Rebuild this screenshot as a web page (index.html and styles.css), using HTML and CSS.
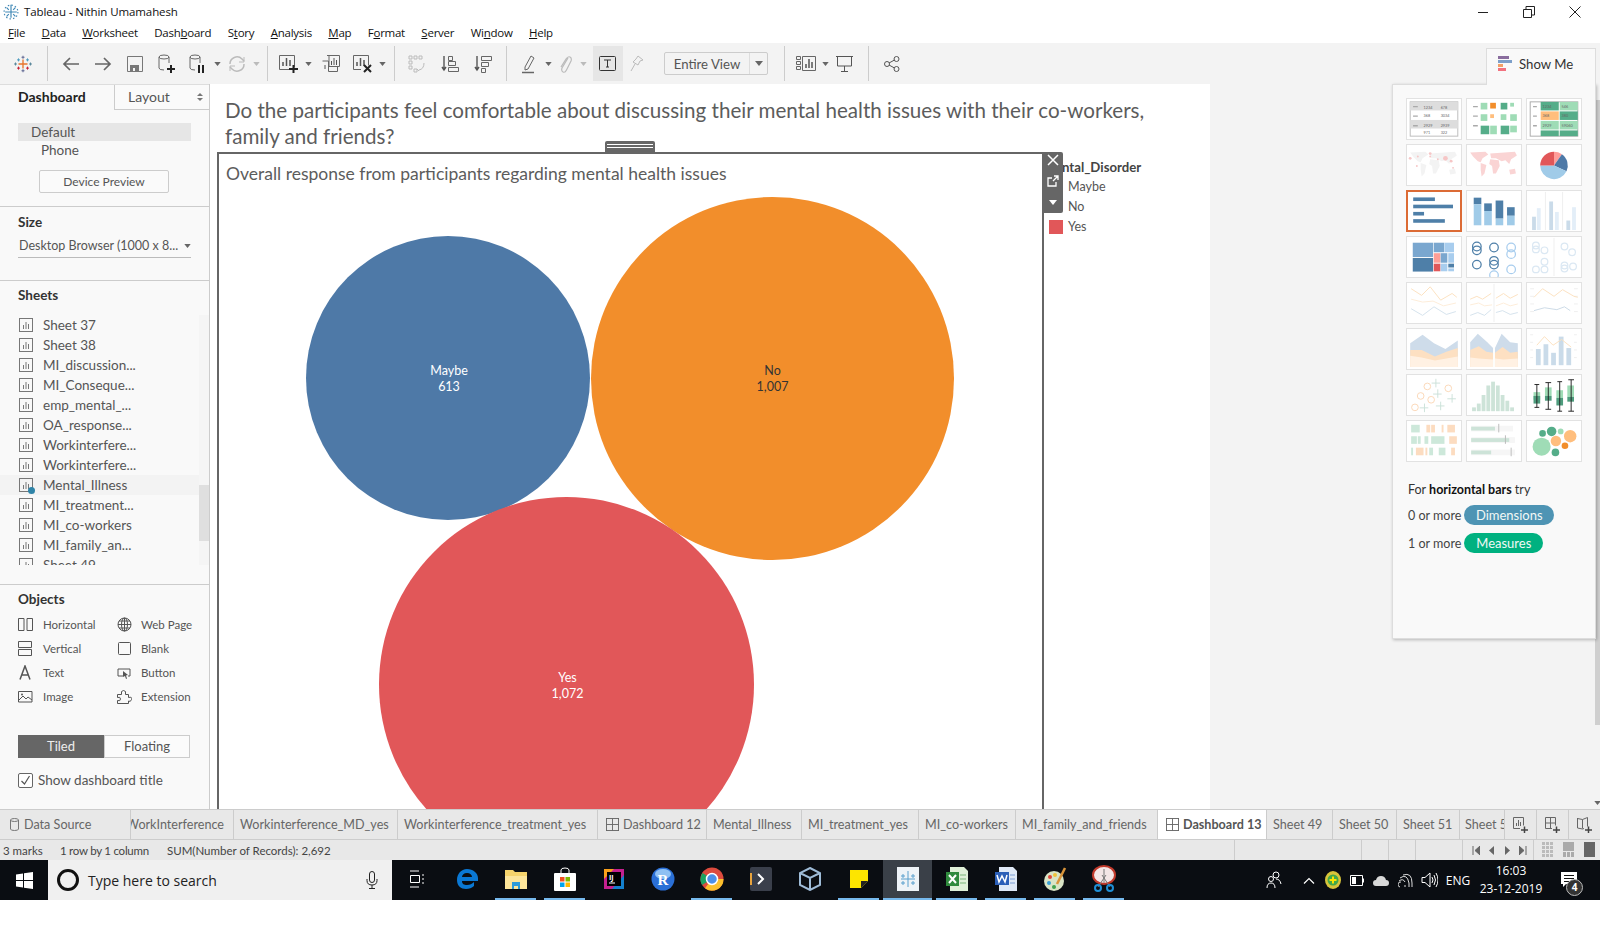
FILE: index.html
```html
<!DOCTYPE html>
<html lang="en">
<head>
<meta charset="utf-8">
<title>Tableau - Nithin Umamahesh</title>
<link rel="stylesheet" href="styles.css">
</head>
<body>
<svg class="defs" width="0" height="0" aria-hidden="true">
  <symbol id="sheet" viewBox="0 0 14 14"><rect x=".5" y=".5" width="13" height="13" fill="none" stroke="#777"/><path d="M4.500 7v4M7 4v7M9.500 6v5" stroke="#777" fill="none"/></symbol>
  <symbol id="dash" viewBox="0 0 14 14"><rect x=".5" y=".5" width="13" height="13" fill="none" stroke="#666"/><path d="M7 .5v13M.5 7h13" stroke="#666" fill="none"/></symbol>
  <symbol id="caret" viewBox="0 0 8 5"><path d="M0 0h8L4 5z" fill="#666"/></symbol>
  <symbol id="caretlight" viewBox="0 0 8 5"><path d="M0 0h8L4 5z" fill="#bbb"/></symbol>
  <symbol id="tlogo" viewBox="-1 0 24 22"><g fill="none" stroke-width="1.300"><path d="M11 5v12M5 11h12" stroke="#e8762d" stroke-width="1.800"/><path d="M11 0v4M9 2h4M11 18v4M9 20h4" stroke="#5b6591"/><path d="M5 3.500v4M3 5.500h4M17 3.500v4M15 5.500h4" stroke="#4e9bc0"/><path d="M5 14.500v4M3 16.500h4M17 14.500v4M15 16.500h4" stroke="#c72035"/><path d="M1 9v4M-1 11h4M21 9v4M19 11h4" stroke="#59879b"/></g></symbol>
</svg>

<header class="titlebar">
  <div class="titleline">
    <svg class="applogo" width="16" height="16" viewBox="0 0 22 22"><g fill="none" stroke="#3f87b5" stroke-width="1.600"><path d="M11 3v16M3 11h16M11 1v3M5 5l3 3M17 5l-3 3M5 17l3-3M17 17l-3-3"/><circle cx="11" cy="11" r="9.500" stroke-dasharray="2 3"/></g></svg>
    <span class="apptitle">Tableau - Nithin Umamahesh</span>
    <div class="winctl">
      <svg width="12" height="12" viewBox="0 0 12 12"><path d="M1 6.500h10" stroke="#222"/></svg>
      <svg width="12" height="12" viewBox="0 0 12 12"><path d="M.5 3.500h8v8h-8zM3 3V.5h8.500V9H9" fill="none" stroke="#222"/></svg>
      <svg width="12" height="12" viewBox="0 0 12 12"><path d="M.5.500l11 11M11.500.500l-11 11" stroke="#222"/></svg>
    </div>
  </div>
  <nav class="menubar">
    <span><u>F</u>ile</span><span><u>D</u>ata</span><span><u>W</u>orksheet</span><span>Dash<u>b</u>oard</span><span>S<u>t</u>ory</span><span><u>A</u>nalysis</span><span><u>M</u>ap</span><span>F<u>o</u>rmat</span><span><u>S</u>erver</span><span>Wi<u>n</u>dow</span><span><u>H</u>elp</span>
  </nav>
</header>

<div class="toolbar">
  <div class="tb tb-logo"><svg width="18" height="18"><use href="#tlogo"/></svg></div>
  <i class="sep s-a"></i>
  <div class="tb"><svg width="18" height="16" viewBox="0 0 18 16"><path d="M17 8H2M8 2L2 8l6 6" fill="none" stroke="#666" stroke-width="1.700"/></svg></div>
  <div class="tb"><svg width="18" height="16" viewBox="0 0 18 16"><path d="M1 8h15M10 2l6 6-6 6" fill="none" stroke="#666" stroke-width="1.700"/></svg></div>
  <div class="tb"><svg width="16" height="16" viewBox="0 0 16 16"><path d="M.5.500h15v15H.5z" fill="none" stroke="#777"/><path d="M3 15V9h9v6H8v-3H6v3z" fill="#777"/></svg></div>
  <div class="tb"><svg width="18" height="20" viewBox="0 0 18 20"><ellipse cx="6" cy="3" rx="5" ry="2" fill="none" stroke="#666"/><path d="M1 3v11q0 2 5 2M11 3v6" fill="none" stroke="#666"/><path d="M9 15h8M13 11v8" stroke="#222" stroke-width="2"/></svg></div>
  <div class="tb tb-n"><svg width="18" height="20" viewBox="0 0 18 20"><ellipse cx="6" cy="3" rx="5" ry="2" fill="none" stroke="#666"/><path d="M1 3v11q0 2 5 2M11 3v6" fill="none" stroke="#666"/><path d="M10 11v8M14 11v8" stroke="#222" stroke-width="2"/></svg></div>
  <svg class="cr" width="7" height="4"><use href="#caret"/></svg>
  <div class="tb tb-r"><svg width="18" height="18" viewBox="0 0 18 18"><path d="M2 9a7 7 0 0 1 12-5l2 2M16 9a7 7 0 0 1-12 5l-2-2" fill="none" stroke="#bbb" stroke-width="1.500"/><path d="M16 2v5h-5M2 16v-5h5" fill="none" stroke="#bbb"/></svg></div>
  <svg class="cr" width="7" height="4"><use href="#caretlight"/></svg>
  <i class="sep s-b"></i>
  <div class="tb"><svg width="20" height="20" viewBox="0 0 20 20"><path d="M.5 1.500h15v12M10 15.500H.5v-14" fill="none" stroke="#666"/><path d="M4 12V8M7.500 12V4M11 12V6" stroke="#555" stroke-width="1.500"/><path d="M10 15h9M14.500 11v8" stroke="#222" stroke-width="2"/></svg></div>
  <svg class="cr cr-n cr-a" width="7" height="4"><use href="#caret"/></svg>
  <div class="tb"><svg width="18" height="17" viewBox="0 0 18 17"><path d="M5 .5h12.500v11H7V0M.5 6h6v10.500h9V12" fill="none" stroke="#666"/><path d="M9.500 10V6M12 10V3M14.500 10V5M3 14v-4" stroke="#555"/></svg></div>
  <div class="tb"><svg width="20" height="20" viewBox="0 0 20 20"><path d="M.5 1.500h15v10M8 15.500H.5v-14" fill="none" stroke="#666"/><path d="M4 12V8M7.500 12V4M11 12V6" stroke="#555" stroke-width="1.500"/><path d="M11 11l7 7M18 11l-7 7" stroke="#222" stroke-width="2"/></svg></div>
  <svg class="cr cr-n" width="7" height="4"><use href="#caret"/></svg>
  <i class="sep s-c"></i>
  <div class="tb"><svg width="18" height="18" viewBox="0 0 18 18"><path d="M1 1h3v3H1zM6 1h3v3H6zM11 1h3v3h-3zM1 6h3v3H1zM1 11h3v3H1zM6 14h3v3H6z" fill="none" stroke="#bbb"/><path d="M16 8q0 6-5 7M9 14l2 2" fill="none" stroke="#bbb"/></svg></div>
  <div class="tb tb-sort"><svg width="18" height="18" viewBox="0 0 18 18"><path d="M3 1v14M1 12l2 3 2-3" fill="none" stroke="#555" stroke-width="1.400"/><path d="M7.500 1.500h4v4h-4zM7.500 6.500h7v4h-7zM7.500 12.500h10v4h-10z" fill="none" stroke="#666"/></svg></div>
  <div class="tb tb-sort"><svg width="18" height="18" viewBox="0 0 18 18"><path d="M3 1v14M1 12l2 3 2-3" fill="none" stroke="#555" stroke-width="1.400"/><path d="M7.500 1.500h10v4h-10zM7.500 7.500h7v4h-7zM7.500 13.500h4v4h-4z" fill="none" stroke="#666"/></svg></div>
  <i class="sep s-d"></i>
  <div class="tb tb-hl"><svg width="14" height="20" viewBox="0 0 14 20"><path d="M3 13L9 2l3 2-6 11-3 1z" fill="none" stroke="#666"/><path d="M0 18.500h12" stroke="#666" stroke-width="1.500"/></svg></div>
  <svg class="cr cr-w" width="7" height="4"><use href="#caret"/></svg>
  <div class="tb tb-clip"><svg width="14" height="20" viewBox="0 0 14 20"><path d="M10 4l-6 10q-1 3 1 4t3.500-2L13 7q1-3-1-4t-4 2L3 13" fill="none" stroke="#bbb" stroke-width="1.200"/></svg></div>
  <svg class="cr cr-w" width="7" height="4"><use href="#caretlight"/></svg>
  <div class="tb tb-t"><svg width="18" height="16" viewBox="0 0 18 16"><rect x=".5" y=".5" width="16" height="14" rx="1" fill="none" stroke="#333"/><path d="M5 4h7M8.500 4v7M7 11h3" fill="none" stroke="#333"/></svg></div>
  <div class="tb tb-pin"><svg width="14" height="17" viewBox="0 0 14 17"><path d="M8 1l5 4-3 1-2 4-5-3 3-3zM5 9l-4 7" fill="none" stroke="#bbb"/></svg></div>
  <div class="fitbox"><span class="fitlabel">Entire View</span><span class="fitcaret"><svg width="8" height="5"><use href="#caret"/></svg></span></div>
  <i class="sep s-e"></i>
  <div class="tb tb-cards"><svg width="20" height="15" viewBox="0 0 20 15"><path d="M.5.500h4v3h-4zM.5 5.500h4v3h-4zM.5 10.500h4v3h-4zM6.500.500h13v14h-13z" fill="none" stroke="#666"/><path d="M10 12V8M13 12V3M16 12V6" stroke="#555" stroke-width="1.500"/></svg></div>
  <svg class="cr cr-n" width="7" height="4"><use href="#caret"/></svg>
  <div class="tb tb-pres"><svg width="18" height="17" viewBox="0 0 18 17"><path d="M0 1.500h17M1.500 2v9h14V2M8.500 11v5M5 16.500h7" fill="none" stroke="#555"/></svg></div>
  <i class="sep s-f"></i>
  <div class="tb tb-share"><svg width="16" height="16" viewBox="0 0 16 16"><circle cx="3" cy="8" r="2.500" fill="none" stroke="#555"/><circle cx="12.500" cy="3" r="2.500" fill="none" stroke="#555"/><circle cx="12.500" cy="13" r="2.500" fill="none" stroke="#555"/><path d="M5 7l5.500-3M5 9l5.500 3" stroke="#555"/></svg></div>
</div>

<main class="workspace">
  <aside class="sidebar">
    <div class="sidetabs">
      <div class="sidetab-on">Dashboard</div>
      <div class="sidetab-off">Layout<span class="updown"><i class="up"></i><i class="down"></i></span></div>
    </div>
    <section class="sec sec-dev">
      <div class="devrow devrow-on">Default</div>
      <div class="devrow devrow-sub">Phone</div>
      <button class="devbtn">Device Preview</button>
    </section>
    <section class="sec sec-size">
      <h3 class="sechead">Size</h3>
      <div class="sizesel"><span>Desktop Browser (1000 x 8...</span><svg width="7" height="4"><use href="#caret"/></svg></div>
    </section>
    <section class="sec sec-sheets">
      <h3 class="sechead">Sheets</h3>
      <div class="sheetwrap">
        <ul class="sheetlist">
          <li><svg width="14" height="14"><use href="#sheet"/></svg>Sheet 37</li>
          <li><svg width="14" height="14"><use href="#sheet"/></svg>Sheet 38</li>
          <li><svg width="14" height="14"><use href="#sheet"/></svg>MI_discussion...</li>
          <li><svg width="14" height="14"><use href="#sheet"/></svg>MI_Conseque...</li>
          <li><svg width="14" height="14"><use href="#sheet"/></svg>emp_mental_...</li>
          <li><svg width="14" height="14"><use href="#sheet"/></svg>OA_response...</li>
          <li><svg width="14" height="14"><use href="#sheet"/></svg>Workinterfere...</li>
          <li><svg width="14" height="14"><use href="#sheet"/></svg>Workinterfere...</li>
          <li class="sheet-hl"><svg width="14" height="14"><use href="#sheet"/></svg><b class="tick"></b>Mental_Illness</li>
          <li><svg width="14" height="14"><use href="#sheet"/></svg>MI_treatment...</li>
          <li><svg width="14" height="14"><use href="#sheet"/></svg>MI_co-workers</li>
          <li><svg width="14" height="14"><use href="#sheet"/></svg>MI_family_an...</li>
          <li><svg width="14" height="14"><use href="#sheet"/></svg>Sheet 49</li>
        </ul>
        <div class="vscroll"><div class="vthumb"></div></div>
      </div>
    </section>
    <section class="sec-obj">
      <h3 class="sechead">Objects</h3>
      <div class="objgrid">
        <div class="obj"><svg width="15" height="15" viewBox="0 0 15 15"><path d="M.5 1.500h5.500v12H.5zM9 1.500h5.500v12H9z" fill="none" stroke="#555"/></svg>Horizontal</div>
        <div class="obj"><svg width="15" height="15" viewBox="0 0 15 15"><circle cx="7.500" cy="7.500" r="6.500" fill="none" stroke="#555"/><path d="M1 7.500h13M2 4h11M2 11h11M7.500 1v13" stroke="#555" fill="none"/><ellipse cx="7.500" cy="7.500" rx="3" ry="6.500" fill="none" stroke="#555"/></svg>Web Page</div>
        <div class="obj"><svg width="15" height="15" viewBox="0 0 15 15"><path d="M.5.500h13v6H.5zM.5 8.500h13v6H.5z" fill="none" stroke="#555"/></svg>Vertical</div>
        <div class="obj"><svg width="15" height="15" viewBox="0 0 15 15"><rect x="1.500" y="1.500" width="12" height="12" rx="1" fill="none" stroke="#555"/></svg>Blank</div>
        <div class="obj"><svg width="15" height="15" viewBox="0 0 15 15"><path d="M2 14.500L7 1l5 13.500M3.500 10h7" fill="none" stroke="#555" stroke-width="1.500"/></svg>Text</div>
        <div class="obj"><svg width="15" height="15" viewBox="0 0 15 15"><path d="M6 11H1V4h12v7h-2" fill="none" stroke="#555"/><path d="M6 6l5 4-2 .5 1 3-1 .5-1-3-2 1z" fill="#555"/></svg>Button</div>
        <div class="obj"><svg width="15" height="15" viewBox="0 0 15 15"><path d="M.5 2.500h13.500v10.500H.5z" fill="none" stroke="#555"/><path d="M1 11l4-4 3 3 2-2 4 3" fill="none" stroke="#555"/><circle cx="4" cy="5.500" r="1" fill="#555"/></svg>Image</div>
        <div class="obj"><svg width="15" height="15" viewBox="0 0 15 15"><path d="M.5 5.500h4q-1-4 2-4t2 4h3v3q4-1 3 2t-3 1.500v2.500H.5v-3q3 1 3-1.500t-3-1.500z" fill="none" stroke="#555"/></svg>Extension</div>
      </div>
      <div class="tilesw"><span class="tile-on">Tiled</span><span class="tile-off">Floating</span></div>
      <label class="showtitle"><span class="chk"><svg width="11" height="11" viewBox="0 0 11 11"><path d="M1.500 6l3 3 5-8" fill="none" stroke="#555" stroke-width="1.200"/></svg></span>Show dashboard title</label>
    </section>
  </aside>

  <div class="dash">
    <h1 class="dashtitle">Do the participants feel comfortable about discussing their mental health issues with their co-workers, family and friends?</h1>
    <div class="handle"><i></i><i></i></div>
    <div class="dashbody">
      <div class="frame">
        <div class="vizhead">Overall response from participants regarding mental health issues</div>
        <div class="bubble b-maybe"><span>Maybe</span><span>613</span></div>
        <div class="bubble b-no"><span>No</span><span>1,007</span></div>
        <div class="bubble b-yes"><span>Yes</span><span>1,072</span></div>
      </div>
      <div class="legend">
        <div class="legend-title">ntal_Disorder</div>
        <div class="legend-row">Maybe</div>
        <div class="legend-row">No</div>
        <div class="legend-row legend-yes">Yes</div>
      </div>
      <div class="floatbar">
        <svg width="12" height="12" viewBox="0 0 12 12"><path d="M1 1l10 10M11 1L1 11" stroke="#fff" stroke-width="1.500"/></svg>
        <svg width="12" height="12" viewBox="0 0 12 12"><path d="M9 7v4H1V3h4M6 6l5-5M7 1h4v4" fill="none" stroke="#fff" stroke-width="1.300"/></svg>
        <svg width="8" height="5" viewBox="0 0 8 5"><path d="M0 0h8L4 5z" fill="#fff"/></svg>
      </div>
    </div>
  </div>

  <div class="rightarea"></div>
  <div class="pagescroll"><div class="pagethumb"></div><svg class="pagearrow" width="7" height="4"><use href="#caret"/></svg></div>

  <aside class="showme">
    <div class="showme-tab">
      <svg width="15" height="15" viewBox="0 0 15 15"><rect y="0" width="11" height="3" fill="#8a6d9e"/><rect y="4" width="14" height="3" fill="#7d9fc9"/><rect y="8" width="5" height="3" fill="#f2a067"/><rect y="12" width="8" height="3" fill="#f2727f"/></svg>
      Show Me
    </div>
    <div class="showme-panel">
      <div class="thumbs">
        <div class="thumb"><svg viewBox="0 0 56 42"><rect x="3" y="3" width="50" height="36" fill="#fff" stroke="#bbb"/><rect x="3" y="3" width="50" height="9" fill="#ddd"/><rect x="3" y="22" width="50" height="9" fill="#ddd"/><path d="M6 8h5M6 18h5M6 28h5" stroke="#aaa" stroke-width="1.500"/><g class="tiny"><text x="17" y="10">1234</text><text x="35" y="10">678</text><text x="17" y="19">368</text><text x="35" y="19">3034</text><text x="17" y="29">2929</text><text x="35" y="29">2939</text><text x="17" y="37">971</text><text x="35" y="37">322</text></g></svg></div>
        <div class="thumb"><svg viewBox="0 0 56 42"><path d="M6 8h5M6 18h5M6 28h5" stroke="#aaa" stroke-width="1.500"/><rect x="14" y="4" width="7" height="7" fill="#9fdcb6"/><rect x="24" y="4" width="6" height="6" fill="#f28e2b"/><rect x="35" y="4" width="7" height="7" fill="#55ad89"/><rect x="45" y="4" width="4" height="4" fill="#9fdcb6"/><rect x="14" y="16" width="7" height="7" fill="#9fdcb6"/><rect x="24" y="16" width="4" height="4" fill="#ffbe7d"/><rect x="35" y="16" width="6" height="6" fill="#9fdcb6"/><rect x="45" y="16" width="7" height="7" fill="#9fdcb6"/><rect x="14" y="28" width="9" height="9" fill="#55ad89"/><rect x="24" y="28" width="7" height="9" fill="#9fdcb6"/><rect x="35" y="28" width="9" height="9" fill="#55ad89"/><rect x="45" y="28" width="7" height="7" fill="#9fdcb6"/></svg></div>
        <div class="thumb"><svg viewBox="0 0 56 42"><rect x="3" y="3" width="50" height="36" fill="#fff" stroke="#aaa"/><rect x="14" y="3" width="19" height="9" fill="#55ad89"/><rect x="34" y="3" width="19" height="9" fill="#9fdcb6"/><rect x="14" y="13" width="19" height="9" fill="#ffbe7d"/><rect x="34" y="13" width="19" height="9" fill="#55ad89"/><rect x="14" y="23" width="19" height="9" fill="#9fdcb6"/><rect x="34" y="23" width="19" height="9" fill="#9fdcb6"/><rect x="14" y="33" width="19" height="6" fill="#55ad89"/><rect x="34" y="33" width="19" height="6" fill="#55ad89"/><path d="M6 8h4M6 18h4M6 28h4" stroke="#aaa" stroke-width="1.500"/><g class="tiny"><text x="16" y="9">1234</text><text x="36" y="9">546</text><text x="16" y="19">368</text><text x="36" y="19">380</text><text x="16" y="29">2929</text><text x="36" y="29">59060</text></g></svg></div>

        <div class="thumb"><svg viewBox="0 0 56 42"><path class="map-g" d="M3 8l16-1 3 3-6 4-2 4-3-1-5-5zM14 19l6 2-2 9-3 3-1-7zM24 9l26-2 2 4-6 4-2 5-4-4-4 1-6-3-5 0zM24 15l9 1 1 6-4 8h-3l-1-8-3-2zM44 26l6-1 1 5-6 1z"/><g fill="#f6c6c6"><circle cx="3" cy="14" r="1.500"/><circle cx="11" cy="12" r="1"/><circle cx="24" cy="12" r="1"/><circle cx="24" cy="9" r="1.500"/><circle cx="40" cy="14" r="2.500"/><circle cx="32" cy="15" r="1"/><circle cx="46" cy="17" r="1.500"/><circle cx="48" cy="24" r="1"/><circle cx="10" cy="22" r="1"/></g></svg></div>
        <div class="thumb"><svg viewBox="0 0 56 42"><path class="map-p" d="M3 8l16-1 3 3-6 4-2 4-3-1-5-5zM14 19l6 2-2 9-3 3-1-7zM24 9l26-2 2 4-6 4-2 5-4-4-4 1-6-3-5 0zM24 15l9 1 1 6-4 8h-3l-1-8-3-2zM44 26l6-1 1 5-6 1z"/></svg></div>
        <div class="thumb"><svg viewBox="0 0 56 42"><path d="M28 21.500V7a14.500 14.500 0 0 1 8.300 2.600z" fill="#ff9d9a"/><path d="M28 21.500l8.300-11.900a14.500 14.500 0 0 1 4.800 18z" fill="#4e79a7"/><path d="M28 21.500l13.100 6.100A14.500 14.500 0 0 1 13.500 21.500z" fill="#a0cbe8"/><path d="M28 21.500H13.500A14.500 14.500 0 0 1 28 7z" fill="#e15759"/></svg></div>

        <div class="thumb thumb-sel"><svg viewBox="0 0 56 42"><g fill="#4e7fa8"><rect x="5" y="6" width="24" height="4"/><rect x="5" y="14" width="44" height="4"/><rect x="5" y="22" width="12" height="4"/><rect x="5" y="30" width="35" height="4"/></g></svg></div>
        <div class="thumb"><svg viewBox="0 0 56 42"><g fill="#4e7fa8"><rect x="6.700" y="7" width="8" height="7"/><rect x="17.700" y="13" width="8" height="8"/><rect x="29.700" y="10" width="8" height="19"/><rect x="41.700" y="17" width="8" height="9"/></g><g fill="#a0cbe8"><rect x="6.700" y="14" width="8" height="22"/><rect x="17.700" y="21" width="8" height="15"/><rect x="29.700" y="29" width="8" height="7"/><rect x="41.700" y="26" width="8" height="10"/></g></svg></div>
        <div class="thumb"><svg viewBox="0 0 56 42"><g fill="#cadbe9"><rect x="5" y="27" width="4" height="14"/><rect x="23" y="11" width="4" height="30"/><rect x="41" y="31" width="4" height="10"/></g><g fill="#e3eef8"><rect x="10" y="18" width="4" height="23"/><rect x="29" y="22" width="4" height="19"/><rect x="47" y="17" width="4" height="24"/></g><path d="M19 1v40M37 1v40" stroke="#eee"/></svg></div>

        <div class="thumb"><svg viewBox="0 0 56 42"><rect x="5.700" y="6" width="21.300" height="15" fill="#7aa7cf"/><rect x="5.700" y="22" width="21.300" height="14.300" fill="#4e7fa8"/><rect x="27.700" y="6" width="11" height="10" fill="#7aa7cf"/><rect x="39" y="6" width="10" height="10" fill="#a8cdee"/><rect x="27.700" y="17" width="7" height="10" fill="#ff9e96"/><rect x="35" y="17" width="7" height="10" fill="#7aa7cf"/><rect x="43" y="17" width="6" height="10" fill="#a8cdee"/><rect x="27.700" y="28" width="7" height="8" fill="#e15759"/><rect x="35" y="28" width="7" height="8" fill="#a8cdee"/><rect x="43" y="28" width="6" height="4" fill="#4e7fa8"/><rect x="43" y="33" width="6" height="3" fill="#a8cdee"/></svg></div>
        <div class="thumb"><svg viewBox="0 0 56 42" fill="none" stroke-width="1.300"><g stroke="#4e7fa8"><circle cx="10" cy="10" r="4.500"/><circle cx="10" cy="14" r="4.500"/><circle cx="28" cy="11" r="4.500"/><circle cx="28" cy="25" r="4.500"/><circle cx="28" cy="29" r="4.500"/><circle cx="10" cy="29" r="4.500"/></g><g stroke="#a8cdee"><circle cx="46" cy="11" r="4.500"/><circle cx="46" cy="18" r="4.500"/><circle cx="46" cy="34" r="4.500"/><circle cx="28" cy="40" r="4.500"/></g></svg></div>
        <div class="thumb"><svg viewBox="0 0 56 42" fill="none"><path d="M28 1v40" stroke="#eee"/><g stroke="#dbe8f3" stroke-width="1.300"><circle cx="9" cy="9" r="3.500"/><circle cx="9" cy="13" r="3.500"/><circle cx="18" cy="14" r="3.500"/><circle cx="18" cy="26" r="3.500"/><circle cx="18" cy="34" r="3.500"/><circle cx="9" cy="34" r="3.500"/><circle cx="39" cy="10" r="3.500"/><circle cx="47" cy="16" r="3.500"/><circle cx="39" cy="30" r="3.500"/><circle cx="39" cy="33" r="3.500"/><circle cx="48" cy="31" r="3.500"/></g></svg></div>

        <div class="thumb"><svg viewBox="0 0 56 42" fill="none" stroke-width="1"><path d="M4 6l11 7 9-9 11 14 12-7 5 4" stroke="#fce0bf"/><path d="M4 17l12 3 11-1 11 5 13-3" stroke="#fdecd8"/><path d="M4 27l12 7 12-9 13 8 10-3" stroke="#d4e1ec"/></svg></div>
        <div class="thumb"><svg viewBox="0 0 56 42" fill="none" stroke-width="1"><path d="M28 1v40" stroke="#eee"/><path d="M3 17l7-3 6 3 9-6M30 16l8-5 7 5 8-4" stroke="#fce0bf"/><path d="M3 23l9-2 6 3 8-1M30 24l8-3 7 3 8-2" stroke="#fdecd8"/><path d="M3 34l8-3 7 3 7-6M30 31l7-2 8 4 8-2" stroke="#d4e1ec"/></svg></div>
        <div class="thumb"><svg viewBox="0 0 56 42" fill="none" stroke-width="1"><path d="M3 6h4M3 14h4M3 22h4M3 30h4M49 6h4M49 14h4M49 22h4M49 30h4" stroke="#eee"/><path d="M7 15l9-9 12 8 9-7 12 7 4 1" stroke="#fce0bf"/><path d="M7 29l11-3 13 2 8-3 6 4" stroke="#cad9e6"/></svg></div>

        <div class="thumb"><svg viewBox="0 0 56 42"><path d="M3 15l13-9 12 9 12 6 13-9v28H3z" fill="#cedcea"/><path d="M3 22l12 0 14 7 12-5 12-4v20H3z" fill="#fde0c2"/><path d="M3 28l12 2 14 3 12-2 12-2v11H3z" fill="#fff1e3"/></svg></div>
        <div class="thumb"><svg viewBox="0 0 56 42"><path d="M3 14l8-9 10 9 6 6V40H3z" fill="#cedcea"/><path d="M29 20l7-15 9 9 8 1v25H29z" fill="#cedcea"/><path d="M3 22l9-4 8 6 7 1v15H3zM29 25l8-6 8 6 8-1v16H29z" fill="#fde0c2"/><path d="M3 30l9 1 15 1v8H3zM29 31l9 1 15-1v9H29z" fill="#fff1e3"/></svg></div>
        <div class="thumb"><svg viewBox="0 0 56 42"><g fill="#cadbe9"><rect x="9" y="21" width="5" height="17"/><rect x="17" y="16" width="5" height="22"/><rect x="25" y="25" width="5" height="13"/><rect x="33" y="8" width="5" height="30"/><rect x="41" y="20" width="5" height="18"/></g><path d="M10 17l8-9 9 9 9-6 10 8" fill="none" stroke="#fce0bf"/><path d="M3 6h3M3 14h3M3 22h3M3 30h3M49 6h3M49 14h3M49 22h3M49 30h3" stroke="#eee"/></svg></div>

        <div class="thumb"><svg viewBox="0 0 56 42" fill="none" stroke-width="1"><g stroke="#fbd7b6"><circle cx="21" cy="12" r="3.500"/><circle cx="14" cy="22" r="3.500"/><circle cx="25" cy="26" r="3.500"/><circle cx="43" cy="14" r="3.500"/><circle cx="8" cy="34" r="3.500"/></g><path d="M30 4v9M25.500 8.500h9M32 15v9M27 20h9M47 20v9M42 25h9M18 30v9M13 34.500h9M35 28v9M30 32.500h9" stroke="#cbe2d9"/></svg></div>
        <div class="thumb"><svg viewBox="0 0 56 42"><g fill="#cde3d8"><rect x="5" y="34" width="4" height="4"/><rect x="10" y="30" width="4" height="8"/><rect x="15" y="21" width="4" height="17"/><rect x="20" y="11" width="4" height="27"/><rect x="25" y="7" width="4" height="31"/><rect x="30" y="11" width="4" height="27"/><rect x="35" y="21" width="4" height="17"/><rect x="40" y="27" width="4" height="11"/><rect x="45" y="34" width="4" height="4"/></g></svg></div>
        <div class="thumb"><svg viewBox="0 0 56 42"><g fill="#9fdcb6"><rect x="6.500" y="18" width="7" height="8"/><rect x="18.500" y="13" width="7" height="9"/><rect x="30.500" y="16" width="7" height="8"/><rect x="42" y="11" width="7" height="12"/></g><g fill="#4e9c7d"><rect x="6.500" y="22" width="7" height="8"/><rect x="18.500" y="22" width="7" height="5"/><rect x="30.500" y="24" width="7" height="8"/><rect x="42" y="23" width="7" height="5"/></g><path d="M10 10v24M7.500 10h5M7.500 34h5M22 8v28M19 8h6M19 36h6M34 7v31M31.500 7h5M31.500 38h5M46 5v33M43 5h6M43 38h6" stroke="#222" fill="none"/></svg></div>

        <div class="thumb"><svg viewBox="0 0 56 42"><g fill="#cde8da"><rect x="4" y="4" width="9" height="8"/><rect x="4" y="16" width="6" height="8"/><rect x="11" y="16" width="3" height="8"/><rect x="18" y="16" width="4" height="8"/><rect x="25" y="16" width="14" height="8"/><rect x="4" y="28" width="2" height="8"/><rect x="23" y="28" width="4" height="8"/><rect x="33" y="28" width="7" height="8"/></g><g fill="#fcdcc0"><rect x="20" y="4" width="4" height="8"/><rect x="25" y="4" width="4" height="8"/><rect x="36" y="4" width="2" height="8"/><rect x="42" y="4" width="8" height="8"/><rect x="44" y="16" width="8" height="8"/><rect x="9" y="28" width="8" height="8"/><rect x="19" y="28" width="2" height="8"/><rect x="46" y="28" width="4" height="8"/></g></svg></div>
        <div class="thumb"><svg viewBox="0 0 56 42"><g fill="#f6f6f6"><rect x="4" y="5" width="44" height="6"/><rect x="4" y="17" width="46" height="6"/><rect x="4" y="30" width="46" height="6"/></g><g fill="#cde3d8"><rect x="4" y="6" width="25" height="4"/><rect x="4" y="18" width="40" height="4"/><rect x="4" y="31" width="21" height="4"/></g><path d="M33 3v9M40 15v9M46 28v9" stroke="#bbb"/></svg></div>
        <div class="thumb"><svg viewBox="0 0 56 42"><circle cx="15" cy="27" r="9.500" fill="#9fdcb6"/><circle cx="16" cy="13" r="3.500" fill="#55ad89"/><circle cx="25.500" cy="11" r="5" fill="#55ad89"/><circle cx="35" cy="11" r="3" fill="#9fdcb6"/><circle cx="45" cy="16" r="6.500" fill="#ffbe7d"/><circle cx="30" cy="21" r="5.500" fill="#ffbe7d"/><circle cx="39.500" cy="26" r="3.500" fill="#f28e2b"/><circle cx="29.500" cy="33" r="4" fill="#55ad89"/></svg></div>
      </div>
      <p class="hint">For <b>horizontal bars</b> try</p>
      <div class="req">0 or more<span class="pill pill-dim">Dimensions</span></div>
      <div class="req">1 or more<span class="pill pill-mea">Measures</span></div>
    </div>
  </aside>
</main>

<div class="tabstrip">
  <div class="tab tab-ds"><svg width="9" height="13" viewBox="0 0 9 13"><ellipse cx="4.500" cy="2" rx="4" ry="1.500" fill="none" stroke="#777"/><path d="M.5 2v9q0 1.500 4 1.500t4-1.500V2" fill="none" stroke="#777"/></svg>Data Source</div>
  <div class="tab tab-clipl"><span>WorkInterference</span></div>
  <div class="tab w164">Workinterference_MD_yes</div>
  <div class="tab w200">Workinterference_treatment_yes</div>
  <div class="tab tab-db w109"><svg width="13" height="13"><use href="#dash"/></svg>Dashboard 12</div>
  <div class="tab w95">Mental_Illness</div>
  <div class="tab w117">MI_treatment_yes</div>
  <div class="tab w97">MI_co-workers</div>
  <div class="tab w142">MI_family_and_friends</div>
  <div class="tab tab-db tab-on w109"><svg width="13" height="13"><use href="#dash"/></svg>Dashboard 13</div>
  <div class="tab w66">Sheet 49</div>
  <div class="tab w64">Sheet 50</div>
  <div class="tab w63">Sheet 51</div>
  <div class="tab tab-clipr">Sheet 52</div>
  <div class="tabbtn"><svg width="16" height="16" viewBox="0 0 16 16"><path d="M.5.500h10v8M7 11.500H.5v-11" fill="none" stroke="#666"/><path d="M3.500 9V6M5.500 9V3M7.500 9V5" stroke="#666"/><path d="M8 13h7M11.500 9.500v7" stroke="#444" stroke-width="1.500"/></svg></div>
  <div class="tabbtn"><svg width="16" height="16" viewBox="0 0 16 16"><path d="M.5.500h10v8M7 11.500H.5v-11M5.500.500v11M.5 6h10" fill="none" stroke="#666"/><path d="M8 13h7M11.500 9.500v7" stroke="#444" stroke-width="1.500"/></svg></div>
  <div class="tabbtn"><svg width="16" height="16" viewBox="0 0 16 16"><path d="M.5 1.500l5 1 5-2v9M7 11.500l-1.500.5-5-1v-10M5.500 2.500v9" fill="none" stroke="#666"/><path d="M8 13h7M11.500 9.500v7" stroke="#444" stroke-width="1.500"/></svg></div>
</div>

<div class="statusbar">
  <span class="st st-a">3 marks</span>
  <span class="st st-b">1 row by 1 column</span>
  <span class="st st-c">SUM(Number of Records): 2,692</span>
  <div class="st-right">
    <i class="st-cell c1"></i><i class="st-cell c2"></i><i class="st-cell c2"></i><i class="st-cell c3"></i>
    <div class="st-nav">
      <svg width="8" height="9" viewBox="0 0 8 9"><path d="M1 0v9M8 0L3 4.500 8 9z" stroke="#666" fill="#666"/></svg>
      <svg width="6" height="9" viewBox="0 0 6 9"><path d="M5 0L0 4.500 5 9z" fill="#666"/></svg>
      <svg width="6" height="9" viewBox="0 0 6 9"><path d="M1 0l5 4.500L1 9z" fill="#666"/></svg>
      <svg width="8" height="9" viewBox="0 0 8 9"><path d="M7 0v9M0 0l5 4.500L0 9z" stroke="#666" fill="#666"/></svg>
    </div>
    <div class="st-view">
      <svg width="12" height="16" viewBox="0 0 12 16"><path d="M0 0h3v3H0zM4 0h3v3H4zM8 0h3v3H8zM0 4h3v3H0zM4 4h3v3H4zM8 4h3v3H8zM0 8h3v3H0zM4 8h3v3H4zM8 8h3v3H8zM0 12h3v3H0zM4 12h3v3H4zM8 12h3v3H8z" fill="#bbb"/></svg>
      <svg width="12" height="16" viewBox="0 0 12 16"><path d="M0 0h11v9H0zM0 10h3v5H0zM4 10h3v5H4zM8 10h3v5H8z" fill="#aaa"/></svg>
      <svg width="12" height="16" viewBox="0 0 12 16"><rect width="11" height="15" fill="#666"/></svg>
    </div>
  </div>
</div>

<footer class="taskbar">
  <div class="tk-start"><svg width="17" height="17" viewBox="0 0 17 17"><path d="M0 2.500L7 1.500V8H0zM8 1.300L17 0v8H8zM0 9h7v6.500L0 14.500zM8 9h9v8l-9-1.300z" fill="#fff"/></svg></div>
  <div class="tk-search">
    <i class="cortana"></i>
    <span class="tk-placeholder">Type here to search</span>
    <svg class="mic" width="12" height="18" viewBox="0 0 12 18"><rect x="3.500" y=".5" width="5" height="11" rx="2.500" fill="none" stroke="#222"/><path d="M1 8v1.500Q1 14 6 14t5-4.500V8M6 14v3M3 17.500h6" fill="none" stroke="#222"/></svg>
  </div>
  <div class="tk-slot tk-view"><svg width="16" height="18" viewBox="0 0 16 18"><path d="M1 1h9M1 17h9M1.500 5.500h9v7h-9zM14 4v2M14 8v2M14 12v2" stroke="#fff" fill="none"/></svg></div>
  <div class="tk-slot"><svg width="22" height="22" viewBox="0 0 22 22"><path d="M11 1C5 1 1 6 1 12c0 6 4 9 9 9 3 0 6-1 8-3v-4c-2 2-4 3-7 3-3 0-5-1-5-4h16v-3C22 5 17 1 11 1zM6 9c0-2 2-4 5-4s5 2 5 4z" fill="#0a78d4"/></svg></div>
  <div class="tk-slot tk-run"><svg width="22" height="20" viewBox="0 0 22 20"><path d="M0 1h8l2 2h12v17H0z" fill="#f6d36b"/><path d="M0 7h22v13H0z" fill="#fde59a"/><path d="M7 13h8v7h-2v-3H9v3H7z" fill="#2e9bd8"/></svg></div>
  <div class="tk-slot tk-run"><svg width="22" height="24" viewBox="0 0 22 24"><path d="M7 6V3q0-2 4-2t4 2v3" fill="none" stroke="#fff"/><rect y="6" width="22" height="18" rx="1" fill="#fff"/><rect x="6" y="10" width="4.500" height="4.500" fill="#f25022"/><rect x="11.500" y="10" width="4.500" height="4.500" fill="#7fba00"/><rect x="6" y="15.500" width="4.500" height="4.500" fill="#00a4ef"/><rect x="11.500" y="15.500" width="4.500" height="4.500" fill="#ffb900"/></svg></div>
  <div class="tk-slot"><svg width="20" height="20" viewBox="0 0 20 20"><rect width="20" height="20" fill="#c5208f"/><path d="M0 0h10L0 10z" fill="#f9a01b"/><path d="M20 20H8L20 6z" fill="#1480ce"/><rect x="3" y="3" width="14" height="14" fill="#000"/><text class="ij" x="5" y="11">IJ</text><path d="M5 14h6" stroke="#fff"/></svg></div>
  <div class="tk-slot"><svg width="24" height="24" viewBox="0 0 24 24"><circle cx="12" cy="12" r="11.500" fill="#2a6fd6"/><ellipse cx="12" cy="7" rx="8" ry="5" fill="#8ec0f3"/><text class="rlogo" x="12" y="17.500">R</text></svg></div>
  <div class="tk-slot tk-run"><svg width="24" height="24" viewBox="0 0 24 24"><circle cx="12" cy="12" r="11.500" fill="#dd4b3e"/><path d="M12 12L2 18A11.500 11.500 0 0 1 2.500 6z" fill="#1ba261"/><path d="M12 12h11.500A11.500 11.500 0 0 1 5 21.300z" fill="#fbc02d"/><circle cx="12" cy="12" r="5.500" fill="#4d90e8" stroke="#fff" stroke-width="1.500"/></svg></div>
  <div class="tk-slot"><svg width="22" height="24" viewBox="0 0 22 24"><rect width="22" height="24" rx="2" fill="#3a3f4b"/><path d="M0 6h2v12H0z" fill="#e8a33d"/><path d="M8 7l5 5-5 5" fill="none" stroke="#fff" stroke-width="2"/></svg></div>
  <div class="tk-slot"><svg width="22" height="24" viewBox="0 0 22 24"><path d="M11 1l10 5v12l-10 5-10-5V6zM1 6l10 5 10-5M11 11v12" fill="none" stroke="#9fbcd8" stroke-width="2"/></svg></div>
  <div class="tk-slot tk-run"><svg width="18" height="18" viewBox="0 0 18 18"><path d="M0 0h18v11l-7 7H0z" fill="#fde500"/><path d="M18 11h-7v7z" fill="#222"/></svg></div>
  <div class="tk-slot tk-run tk-active"><svg width="22" height="24" viewBox="0 0 22 24"><rect width="22" height="24" fill="#eef3f7"/><path d="M11 4v16M4 12h14M6 7v4M4 9h4M16 7v4M14 9h4M6 14v4M4 16h4M16 14v4M14 16h4" stroke="#5ba0cd"/></svg></div>
  <div class="tk-slot tk-run"><svg width="22" height="24" viewBox="0 0 22 24"><path d="M4 0h14l4 4v20H4z" fill="#dff0d8"/><path d="M0 5h13v14H0z" fill="#2f8a3d"/><path d="M3 8l7 8M10 8l-7 8" stroke="#fff" stroke-width="2"/><path d="M14 8h6M14 12h6M14 16h6" stroke="#7bb57b"/></svg></div>
  <div class="tk-slot tk-run"><svg width="22" height="24" viewBox="0 0 22 24"><path d="M4 0h14l4 4v20H4z" fill="#dfe9f7"/><path d="M0 5h14v13H0z" fill="#2b5fb8"/><path d="M2 8l2 7 3-6 3 6 2-7" fill="none" stroke="#fff" stroke-width="1.500"/><path d="M15 8h5M15 12h5M15 16h5" stroke="#7c9ed4"/></svg></div>
  <div class="tk-slot tk-run"><svg width="24" height="26" viewBox="0 0 24 26"><ellipse cx="11" cy="15" rx="10" ry="10" fill="#d9e4c6"/><circle cx="7" cy="11" r="2" fill="#e0463c"/><circle cx="12" cy="9" r="2" fill="#f0c23a"/><circle cx="6" cy="17" r="2" fill="#3aa0d6"/><circle cx="11" cy="21" r="2" fill="#41a24d"/><path d="M14 18L22 2" stroke="#d9943a" stroke-width="2.500"/></svg></div>
  <div class="tk-slot tk-run"><svg width="24" height="28" viewBox="0 0 24 28"><ellipse cx="12" cy="10" rx="11" ry="9" fill="#f3e6e6" stroke="#c0392b" stroke-width="2"/><path d="M12 4v14M6 22l8-12M18 22L10 10" stroke="#777"/><circle cx="6" cy="23" r="3" fill="none" stroke="#1f8fd6" stroke-width="2"/><circle cx="18" cy="23" r="3" fill="none" stroke="#1f8fd6" stroke-width="2"/></svg></div>
  <div class="tray">
    <div class="tr tr-person"><svg width="16" height="18" viewBox="0 0 16 18"><circle cx="10" cy="4" r="3" fill="none" stroke="#fff"/><circle cx="5" cy="8" r="2.500" fill="none" stroke="#fff"/><path d="M1 17q0-5 4-5t4 5M10 8q4 0 5 5" fill="none" stroke="#fff"/></svg></div>
    <div class="tr"><svg width="12" height="7" viewBox="0 0 12 7"><path d="M1 6.500l5-5 5 5" fill="none" stroke="#fff" stroke-width="1.200"/></svg></div>
    <div class="tr"><svg width="16" height="18" viewBox="0 0 16 18"><ellipse cx="8" cy="9" rx="8" ry="9" fill="#d8c43a"/><circle cx="8" cy="9" r="5.500" fill="#42a84a"/><path d="M8 5.500v7M4.500 9h7" stroke="#fde500" stroke-width="2"/></svg></div>
    <div class="tr"><svg width="15" height="11" viewBox="0 0 15 11"><path d="M.5.500h12v10H.5zM13.500 3.500v4" fill="none" stroke="#fff"/><rect x="2" y="2" width="4" height="7" fill="#fff"/></svg></div>
    <div class="tr"><svg width="16" height="11" viewBox="0 0 16 11"><path d="M3 11a3 3 0 0 1 0-6q1-4 5-4t5 4a3 3 0 0 1 0 6z" fill="#d8d8d8"/></svg></div>
    <div class="tr"><svg width="15" height="16" viewBox="0 0 15 16"><path d="M2 15a2 2 0 0 1 1-5M1 9q4-3 6 1M2 6q7-5 9 5v4M5 3q9-3 9 8v4M7 15v-2" fill="none" stroke="#ddd"/></svg></div>
    <div class="tr"><svg width="17" height="16" viewBox="0 0 17 16"><path d="M1 5.500h3L9 1v14l-5-4.500H1zM11 5q2 3 0 6M13 3q3 5 0 10M15 1q4 7 0 14" fill="none" stroke="#fff"/></svg></div>
    <div class="tr tr-lang">ENG</div>
    <div class="tr tr-clock"><span>16:03</span><span>23-12-2019</span></div>
    <div class="tr tr-notif"><svg width="16" height="16" viewBox="0 0 16 16"><path d="M0 0h16v12H5l-3 3v-3H0z" fill="#fff"/><path d="M3 3.500h10M3 6.500h10M3 9.500h7" stroke="#111"/></svg><span class="badge">4</span></div>
  </div>
</footer>
</body>
</html>
```

FILE: styles.css
```css
* { box-sizing: border-box; }
html, body { margin: 0; padding: 0; background: #fff; }
body { width: 1600px; height: 942px; overflow: hidden; font-family: Lato, "Open Sans", sans-serif; color: #555; }
.defs { position: absolute; }
h1, h3, p, ul { margin: 0; padding: 0; font-weight: normal; }
ul { list-style: none; }
i { font-style: normal; display: block; }

/* title + menu */
.titlebar { height: 43px; background: #fff; font-family: "Open Sans", sans-serif; color: #111; }
.titleline { height: 23px; display: flex; align-items: center; padding-left: 3px; font-size: 11.500px; letter-spacing: -.1px; }
.applogo { margin-right: 5px; }
.winctl { margin-left: auto; display: flex; gap: 34px; padding-right: 19px; align-items: center; }
.menubar { height: 20px; display: flex; padding-left: 8px; gap: 16.400px; font-size: 11.500px; letter-spacing: -.25px; line-height: 20px; }

/* toolbar */
.toolbar { height: 41px; background: #f3f3f3; display: flex; align-items: center; }
.tb { width: 32px; height: 35px; display: flex; align-items: center; justify-content: center; flex: none; }
.tb-logo { width: 46px; }
.tb-n { width: 30px; }
.tb-r { width: 30px; }
.tb-sort { margin-left: 1px; }
.tb-hl { margin-left: 6px; }
.tb-clip { width: 30px; }
.tb-t { width: 30px; background: #e6e6e6; margin-left: 8px; }
.tb-pin { margin-left: -2px; }
.tb-cards { margin-left: 5px; width: 32px; }
.tb-pres { margin-left: -1px; }
.tb-share { margin-left: 7px; }
.cr { flex: none; margin: 0 1px; }
.cr-n { margin: 0 1px 0 0; }
.cr-a { margin-right: 3px; }
.cr-w { margin: 0 -2px 0 0; }
.sep { width: 1px; height: 35px; background: #ccc; flex: none; }
.s-a { margin: 0 7px 0 1px; }
.s-b { margin: 0 5px 0 6px; }
.s-c { margin: 0 6px 0 7px; }
.s-d { margin: 0 0 0 7px; }
.s-e { margin: 0 0 0 16px; }
.s-f { margin: 0 0 0 7px; }
.fitbox { width: 104px; height: 23px; margin-left: 11px; border: 1px solid #ccc; border-radius: 2px; display: flex; align-items: center; font-size: 13.200px; color: #555; flex: none; }
.fitlabel { width: 84px; text-align: center; }
.fitcaret { flex: 1; height: 100%; border-left: 1px solid #ddd; display: flex; align-items: center; justify-content: center; }

/* workspace */
.workspace { position: relative; height: 725px; display: flex; overflow: visible; }
.sidebar { width: 210px; flex: none; background: #f9f9f9; border-right: 1px solid #ccc; display: flex; flex-direction: column; height: 725px; font-size: 13px; }
.sidetabs { height: 26px; display: flex; border-top: 1px solid #ddd; flex: none; }
.sidetab-on { width: 114px; padding-left: 18px; font-weight: 700; font-size: 14px; line-height: 24px; color: #222; }
.sidetab-off { flex: 1; border-left: 1px solid #ccc; border-bottom: 1px solid #ccc; padding-left: 13px; font-size: 14px; line-height: 24px; display: flex; align-items: center; background: #fafafa; }
.updown { margin-left: auto; margin-right: 6px; display: flex; flex-direction: column; gap: 2px; }
.up, .down { width: 0; height: 0; border-left: 3px solid transparent; border-right: 3px solid transparent; }
.up { border-bottom: 3px solid #777; }
.down { border-top: 3px solid #777; }
.sec { border-bottom: 1px solid #ccc; flex: none; }
.sec-dev { height: 97px; padding: 13px 18px 0; }
.devrow { height: 18px; line-height: 18px; font-size: 13.500px; }
.devrow-on { background: #e6e6e6; padding-left: 13px; }
.devrow-sub { padding-left: 23px; }
.devbtn { display: block; width: 130px; height: 23px; margin: 11px 0 0 21px; border: 1px solid #ccc; border-radius: 2px; background: #fafafa; font: 12px Lato, sans-serif; color: #555; padding: 0; }
.sechead { font-size: 13.500px; font-weight: 700; color: #333; line-height: 18px; }
.sec-size { height: 74px; padding: 6px 18px 0; }
.sizesel { margin-top: 6px; height: 21px; border-bottom: 1px solid #bbb; font-size: 12.500px; display: flex; align-items: center; justify-content: space-between; padding: 0 0 3px 1px; white-space: nowrap; }
.sec-sheets { height: 304px; padding-top: 5px; }
.sec-sheets .sechead { padding-left: 18px; }
.sheetwrap { display: flex; height: 250px; margin-top: 11px; overflow: hidden; }
.sheetlist { width: 199px; background: #f9f9f9; flex: none; }
.sheetlist li { height: 20px; display: flex; align-items: center; padding-left: 19px; gap: 10px; position: relative; font-size: 13.500px; }
.sheet-hl { background: #f3f3f3; }
.tick { position: absolute; left: 28px; top: 12px; width: 7px; height: 7px; border-radius: 50%; background: #2f84a8; }
.vscroll { flex: 1; background: #f5f5f5; padding-top: 170px; }
.vthumb { height: 56px; background: #dfdfdf; }
.sec-obj { padding: 5px 0 0 18px; flex: 1; }
.objgrid { display: grid; grid-template-columns: 99px 90px; grid-auto-rows: 24px; margin-top: 4px; }
.obj { display: flex; align-items: center; gap: 10px; font-size: 11.500px; }
.obj:nth-child(even) { gap: 9px; }
.obj svg { flex: none; }
.tilesw { display: flex; width: 172px; height: 23px; margin-top: 27px; font-size: 13px; }
.tile-on { width: 86px; background: #666; color: #eee; text-align: center; line-height: 23px; }
.tile-off { flex: 1; border: 1px solid #ccc; background: #fbfbfb; text-align: center; line-height: 21px; }
.showtitle { display: flex; align-items: center; gap: 5px; margin-top: 14px; font-size: 13.500px; }
.chk { width: 15px; height: 15px; border: 1px solid #666; border-radius: 2px; display: flex; align-items: center; justify-content: center; background: #fff; }

/* dashboard */
.dash { width: 1000px; flex: none; background: #fff; height: 725px; overflow: hidden; position: relative; }
.dashtitle { width: 930px; margin-left: 15px; padding-top: 14px; font-size: 20.600px; line-height: 25.500px; color: #5c5c5c; height: 58px; }
.handle { position: absolute; left: 395px; top: 57px; width: 50px; height: 12px; background: #666; border-radius: 2px 2px 0 0; padding: 3px 2px 0; }
.handle i { height: 1px; background: #fff; margin-bottom: 2px; }
.dashbody { display: flex; padding: 10px 0 0 7px; position: relative; }
.frame { width: 827px; height: 700px; border: 2px solid #666; border-bottom: 0; position: relative; flex: none; overflow: hidden; }
.vizhead { padding: 10px 0 0 7px; font-size: 17.500px; line-height: 20px; color: #5c5c5c; }
.bubble { position: absolute; border-radius: 50%; display: flex; flex-direction: column; align-items: center; justify-content: center; font-size: 12.500px; line-height: 16px; color: #fff; }
.b-maybe { left: 87px; top: 82px; width: 284px; height: 284px; background: #4e79a7; padding: 2px 0 0 2px; }
.b-no { left: 372px; top: 43px; width: 363px; height: 363px; background: #f28e2b; color: #333; }
.b-yes { left: 160px; top: 343px; width: 375px; height: 375px; background: #e15759; padding: 3px 0 0 2px; }
.legend { flex: 1; padding: 5px 0 0 20px; font-size: 12.500px; }
.legend-title { font-weight: 700; font-size: 13.200px; height: 20px; line-height: 20px; color: #444; margin-left: -2px; }
.legend-row { height: 20px; line-height: 20px; padding-left: 4px; position: relative; }
.legend-yes::before { content: ""; position: absolute; left: -15px; top: 3px; width: 14px; height: 14px; background: #e15759; }
.floatbar { position: absolute; left: 832px; top: 10px; width: 21px; height: 61px; background: #666; display: flex; flex-direction: column; align-items: center; gap: 9px; padding: 2px 0 0 0; border-radius: 0 2px 2px 0; }
.floatbar svg:last-child { margin-top: 4px; }

.rightarea { flex: 1; background: #f3f3f3; }
.pagescroll { position: absolute; right: 0; top: 0; width: 5px; height: 725px; background: #f3f3f3; }
.pagethumb { margin-top: 16px; height: 625px; background: #cfcfcf; }
.pagearrow { position: absolute; left: -1px; bottom: 4px; }

/* show me */
.showme { position: absolute; right: 4px; top: -36px; width: 204px; }
.showme-tab { margin-left: 94px; height: 37px; background: #f9f9f9; border: 1px solid #ddd; border-bottom: 0; display: flex; align-items: center; gap: 6px; padding: 0 0 7px 11px; font-size: 13.200px; color: #333; position: relative; z-index: 2; }
.showme-panel { height: 555px; margin-top: -1px; background: #f9f9f9; border: 1px solid #ddd; padding: 13px 0 0 13px; box-shadow: 1px 1px 3px rgba(0,0,0,.25); }
.thumbs { display: grid; grid-template-columns: repeat(3, 56px); grid-auto-rows: 42px; gap: 4px; }
.thumb { border: 1px solid #e2e2e2; background: #fff; overflow: hidden; }
.thumb svg { display: block; width: 100%; height: 100%; }
.thumb-sel { border: 2px solid #dc6b35; }
.tiny { font: 4px Lato, sans-serif; fill: #666; }
.map-g { fill: #f3f3f3; }
.map-p { fill: #fad4d4; }
.hint { margin: 20px 0 0 2px; font-size: 12.500px; line-height: 16px; color: #333; }
.hint b { color: #111; }
.req { display: flex; align-items: center; gap: 3px; height: 20px; margin: 7px 0 0 2px; font-size: 12.500px; color: #444; }
.req + .req { margin-top: 8px; }
.pill { height: 20px; border-radius: 10px; color: #f2f8f6; text-align: center; line-height: 20px; font-size: 13px; }
.pill-dim { width: 90px; background: #4e94b4; }
.pill-mea { width: 79px; background: #00b180; }

/* tabs */
.tabstrip { height: 31px; background: #e8e8e8; border-top: 1px solid #ccc; border-bottom: 1px solid #ccc; display: flex; font-size: 12.600px; color: #666; white-space: nowrap; }
.tab { padding: 0 0 0 6px; display: flex; align-items: center; gap: 4px; border-right: 1px solid #ccc; flex: none; overflow: hidden; }
.tab-db { padding-left: 8px; }
.w63 { width: 63px; } .w64 { width: 64px; } .w66 { width: 66px; } .w95 { width: 95px; } .w97 { width: 97px; }
.w109 { width: 109px; } .w117 { width: 117px; } .w142 { width: 142px; } .w164 { width: 164px; } .w200 { width: 200px; }
.tab-ds { width: 131px; padding-left: 10px; gap: 5px; }
.tab-clipl { width: 103px; padding: 0 9px 0 0; justify-content: flex-end; overflow: hidden; }
.tab-on { background: #fff; font-weight: 700; color: #555; }
.tab-clipr { width: 44px; padding: 0 0 0 5px; overflow: hidden; border-right: 0; }
.tabbtn { width: 32px; display: flex; align-items: center; justify-content: center; border-left: 1px solid #ccc; flex: none; }

/* status */
.statusbar { height: 20px; background: #e8e8e8; display: flex; align-items: center; font-size: 11.500px; color: #444; position: relative; }
.st-a { margin-left: 3px; width: 57px; }
.st-b { width: 107px; letter-spacing: -.25px; }
.st-right { margin-left: auto; display: flex; height: 100%; align-items: stretch; }
.st-cell { border-left: 1px solid #ccc; }
.c1 { width: 127px; }
.c2 { width: 27px; }
.c3 { width: 47px; }
.st-nav { width: 71px; border-left: 1px solid #ccc; display: flex; align-items: center; justify-content: space-between; padding: 0 6px 0 9px; }
.st-view { width: 67px; border-left: 1px solid #ccc; display: flex; align-items: center; justify-content: space-around; padding-left: 4px; }

/* taskbar */
.taskbar { height: 40px; background: #0a0d12; display: flex; color: #fff; font-family: "Open Sans", sans-serif; }
.tk-start { width: 48px; display: flex; align-items: center; justify-content: center; flex: none; }
.tk-search { width: 344px; background: #f0f0f0; display: flex; align-items: center; color: #222; flex: none; padding-left: 9px; }
.cortana { width: 22px; height: 22px; border: 3px solid #111; border-radius: 50%; flex: none; }
.tk-placeholder { margin-left: 9px; font-size: 14px; }
.mic { margin-left: auto; margin-right: 14px; }
.tk-slot { width: 41px; margin: 0 4px; display: flex; align-items: center; justify-content: center; flex: none; border-bottom: 2px solid transparent; }
.tk-view { width: 42px; }
.tk-run { border-bottom-color: #76b9ed; }
.tk-active { background: #3a4048; width: 49px; margin: 0; }
.ij { font: 700 7px "Open Sans", sans-serif; fill: #fff; }
.rlogo { font: 700 15px "Liberation Serif", serif; fill: #fff; text-anchor: middle; }
.tray { margin-left: auto; display: flex; align-items: center; height: 100%; }
.tr { width: 24px; display: flex; align-items: center; justify-content: center; flex: none; }
.tr-person { width: 47px; }
.tr-lang { width: 30px; font-size: 12px; margin-left: 2px; }
.tr-clock { width: 76px; flex-direction: column; font-size: 12px; line-height: 18px; }
.tr-notif { width: 51px; position: relative; padding-right: 12px; height: 100%; }
.badge { position: absolute; left: 17px; top: 19px; width: 17px; height: 17px; border-radius: 50%; background: #333; border: 1px solid #bbb; font-size: 10px; font-weight: 700; line-height: 15px; text-align: center; }
```
